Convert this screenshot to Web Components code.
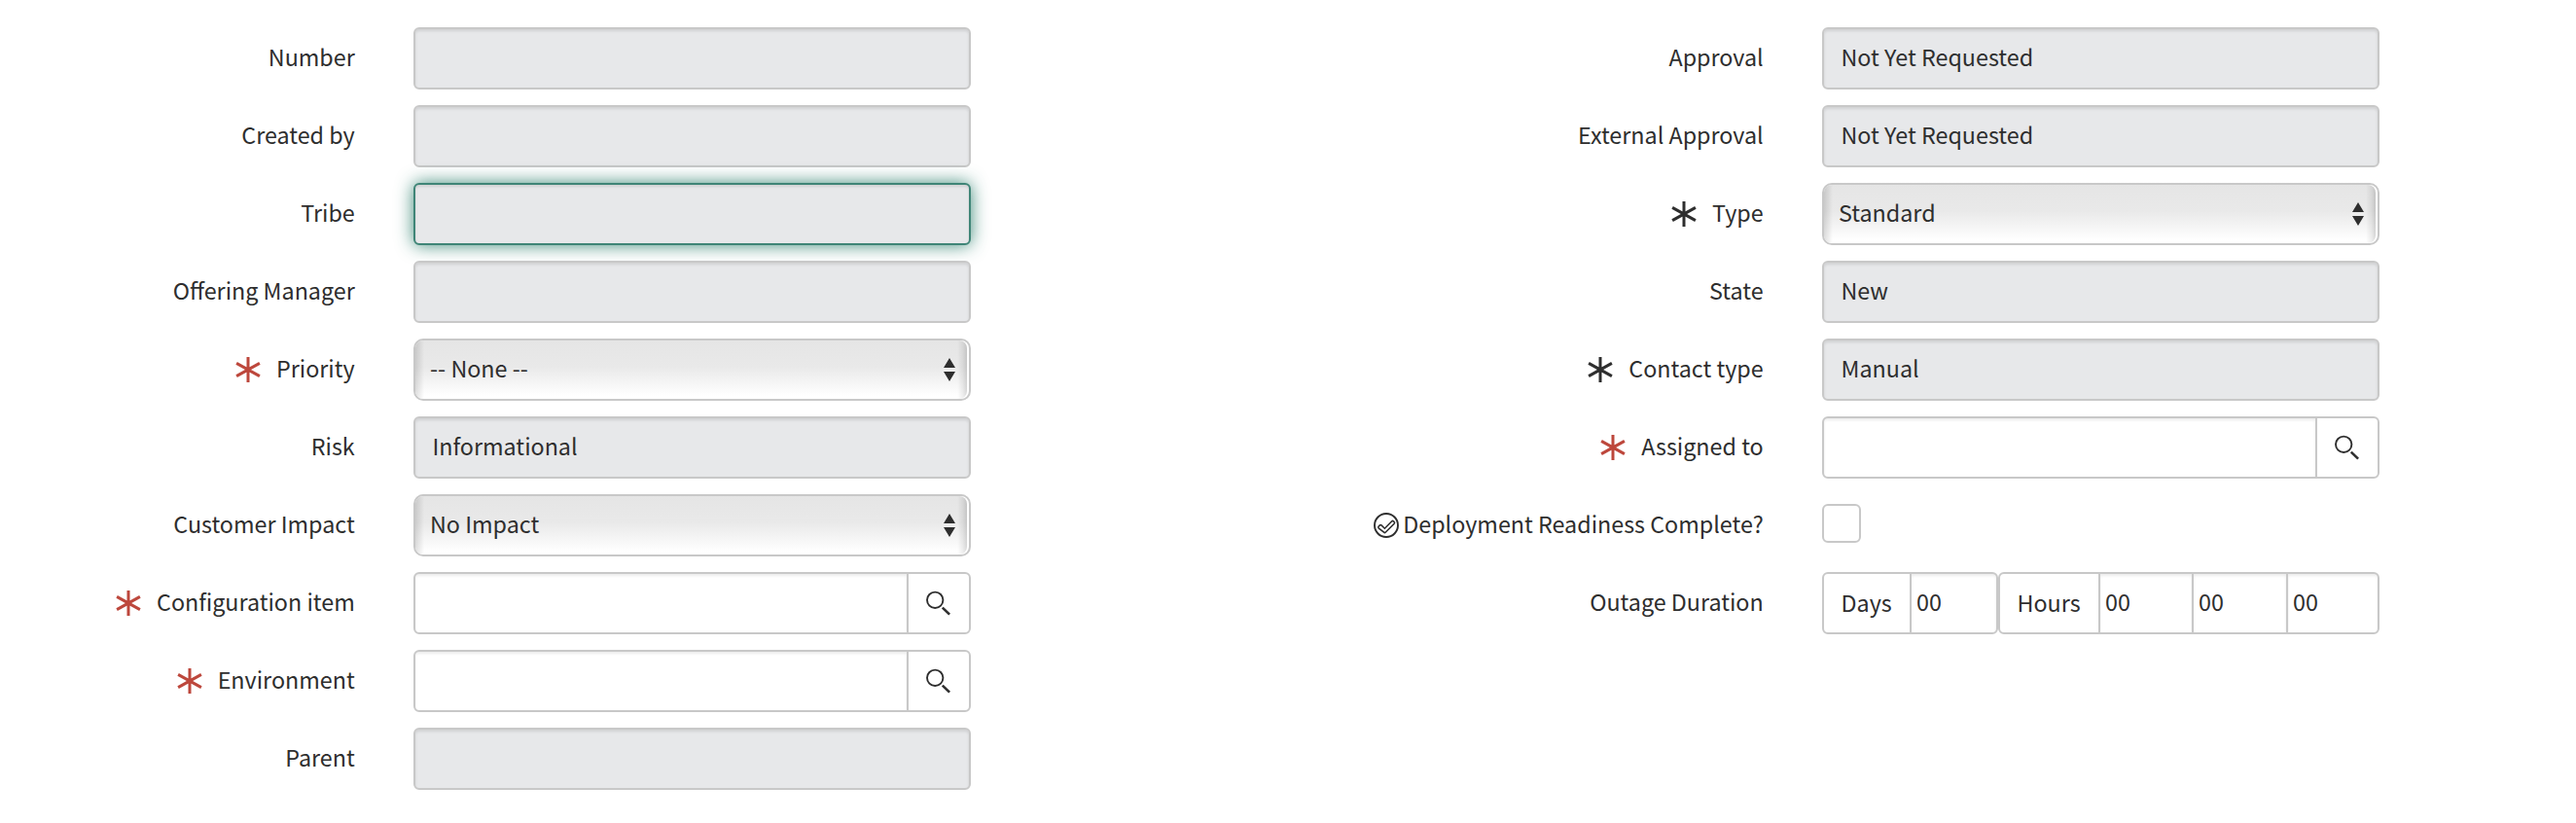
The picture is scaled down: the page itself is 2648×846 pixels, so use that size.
<!DOCTYPE html>
<html lang="en">
<head>
<meta charset="utf-8">
<title>Change request</title>
<style>
  html, body { margin: 0; background: #fff; }
  body {
    font: 23.3px/34px "Noto Sans CJK SC", "Noto Sans", sans-serif;
    color: #2e2e2e;
    --line: #c8c8c8;
    --readonly: #e7e8ea;
  }
</style>
</head>
<body>
<change-form>
  <form-row slot="left" label="Number"><text-field></text-field></form-row>
  <form-row slot="left" label="Created by"><text-field></text-field></form-row>
  <form-row slot="left" label="Tribe"><text-field focused></text-field></form-row>
  <form-row slot="left" label="Offering Manager"><text-field></text-field></form-row>
  <form-row slot="left" label="Priority" mark="required"><select-field>-- None --</select-field></form-row>
  <form-row slot="left" label="Risk"><text-field>Informational</text-field></form-row>
  <form-row slot="left" label="Customer Impact"><select-field>No Impact</select-field></form-row>
  <form-row slot="left" label="Configuration item" mark="required"><lookup-field></lookup-field></form-row>
  <form-row slot="left" label="Environment" mark="required"><lookup-field></lookup-field></form-row>
  <form-row slot="left" label="Parent"><text-field></text-field></form-row>

  <form-row slot="right" label="Approval"><text-field>Not Yet Requested</text-field></form-row>
  <form-row slot="right" label="External Approval"><text-field>Not Yet Requested</text-field></form-row>
  <form-row slot="right" label="Type" mark="filled"><select-field>Standard</select-field></form-row>
  <form-row slot="right" label="State"><text-field>New</text-field></form-row>
  <form-row slot="right" label="Contact type" mark="filled"><text-field>Manual</text-field></form-row>
  <form-row slot="right" label="Assigned to" mark="required"><lookup-field></lookup-field></form-row>
  <form-row slot="right" label="Deployment Readiness Complete?" mark="check"><check-field></check-field></form-row>
  <form-row slot="right" label="Outage Duration"><duration-field></duration-field></form-row>
</change-form>

<script>
const define = (name, html) => {
  const template = document.createElement('template');
  template.innerHTML = html;
  customElements.define(name, class extends HTMLElement {
    constructor() {
      super();
      this.attachShadow({ mode: 'open' }).append(template.content.cloneNode(true));
    }
  });
};

define('change-form', `
  <style>
    :host { display: grid; grid-template-columns: 998px 1448px; box-sizing: border-box; width: 2648px; height: 846px; padding-top: 28px; overflow: hidden; }
    section { display: flex; flex-direction: column; gap: 16px; }
  </style>
  <section><slot name="left"></slot></section>
  <section><slot name="right"></slot></section>`);

define('text-field', `
  <style>
    :host { display: flex; align-items: center; box-sizing: border-box; height: 64px; padding: 0 17.5px 4px; border: 2px solid var(--line); border-radius: 6px; background: var(--readonly); box-shadow: inset 0 2px 3px rgba(0,0,0,.1); white-space: pre; }
    :host([focused]) { border-color: #3f8577; box-shadow: inset 0 2px 3px rgba(0,0,0,.1), 0 0 18px rgba(31,119,99,.85); }
  </style>
  <slot></slot>`);

define('select-field', `
  <style>
    :host { display: flex; align-items: stretch; box-sizing: border-box; height: 64px; padding-right: 2px; border: 2px solid var(--line); border-radius: 10px; background: #fff; }
    div { flex: 1; display: flex; align-items: center; justify-content: space-between; padding: 0 12px 4px 15px; border-radius: 8px; white-space: pre;
      background:
        linear-gradient(to right, rgba(0,0,0,.13), rgba(0,0,0,.07) 4px, transparent 9px),
        linear-gradient(to left, rgba(0,0,0,.15), rgba(0,0,0,.07) 4px, transparent 10px),
        linear-gradient(#e5e5e5, #e9e9e9 45%, #fff 95%); }
    svg { display: block; margin-top: 4px; }
  </style>
  <div><slot></slot><svg width="12" height="24" viewBox="0 0 12 24" fill="#2e2e2e"><path d="M6 0l6 10H0zM0 14h12L6 24z"/></svg></div>`);

define('lookup-field', `
  <style>
    :host { display: flex; box-sizing: border-box; height: 64px; border: 2px solid var(--line); border-radius: 6px; background: #fff; overflow: hidden; }
    .value { flex: 1; box-shadow: inset 0 2px 3px rgba(0,0,0,.08); }
    .button { display: flex; align-items: center; justify-content: center; box-sizing: border-box; width: 64px; border-left: 2px solid var(--line); }
    svg { display: block; }
  </style>
  <div class="value"></div>
  <div class="button"><svg width="26" height="26" viewBox="0 0 26 26" fill="none" stroke="#2e2e2e"><circle cx="9.2" cy="9.8" r="8.2" stroke-width="1.9"/><path d="M16.8 17.6l7.3 7" stroke-width="2.6"/></svg></div>`);

define('check-field', `
  <style>
    :host { display: flex; align-items: center; height: 64px; }
    div { box-sizing: border-box; width: 40px; height: 40px; margin-bottom: 4px; border: 2px solid var(--line); border-radius: 6px; background: #fff; }
  </style>
  <div></div>`);

define('duration-field', `
  <style>
    :host { display: flex; }
    .group { display: flex; box-sizing: border-box; height: 64px; border: 2px solid var(--line); border-radius: 6px; overflow: hidden; }
    .days { width: 181px; }
    .hours { width: 392px; }
    .unit, .part { display: flex; align-items: center; box-sizing: border-box; }
    .unit { padding: 0 0 2px 17.5px; }
    .days .unit { width: 88px; }
    .hours .unit { width: 101px; }
    .part { width: 97px; padding: 0 0 4px 5px; border-left: 2px solid var(--line); box-shadow: inset 0 2px 3px rgba(0,0,0,.08); }
    .unit + .part { width: 96px; }
    .part:last-child { flex: 1; }
  </style>
  <div class="group days"><div class="unit">Days</div><div class="part">00</div></div>
  <div class="group hours"><div class="unit">Hours</div><div class="part">00</div><div class="part">00</div><div class="part">00</div></div>`);

const STAR = '<svg class="star" width="26" height="26" viewBox="0 0 26 26" fill="none" stroke="currentColor" stroke-width="3"><path d="M13 0v26M1.1 6.4l23.8 13.2M24.9 6.4L1.1 19.6"/></svg>';
const CHECK = '<svg class="check" width="26" height="26" viewBox="0 0 26 26" fill="none" stroke="currentColor"><circle cx="13" cy="13" r="12" stroke-width="1.9"/><path d="M5.1 14.2l1.3-1.3q.8-.7 1.6 0l3.4 3.3 7.4-7.4q.8-.7 1.6 0l.8.8q.7.8 0 1.6l-9 9q-.8.7-1.6 0L5.1 15.8q-.7-.8 0-1.6z" stroke-width="1.6"/></svg>';

customElements.define('form-row', class extends HTMLElement {
  connectedCallback() {
    if (this.shadowRoot) return;
    const mark = this.getAttribute('mark');
    const icon = mark === 'check' ? CHECK : mark ? STAR : '';
    this.attachShadow({ mode: 'open' }).innerHTML = `
      <style>
        :host { display: grid; grid-template-columns: 1fr 573px; column-gap: 60.3px; height: 64px; }
        .label { display: flex; align-items: center; justify-content: flex-end; padding-bottom: 4px; white-space: nowrap; }
        svg { display: block; flex: none; margin-top: 4px; }
        .star { margin-right: 16px; color: #2e2e2e; }
        .star.required { color: #bd473c; }
        .check { margin-right: 4.5px; }
      </style>
      <div class="label">${icon}<span></span></div>
      <slot></slot>`;
    this.shadowRoot.querySelector('span').textContent = this.getAttribute('label');
    if (mark === 'required') this.shadowRoot.querySelector('.star').classList.add('required');
  }
});
</script>
</body>
</html>
